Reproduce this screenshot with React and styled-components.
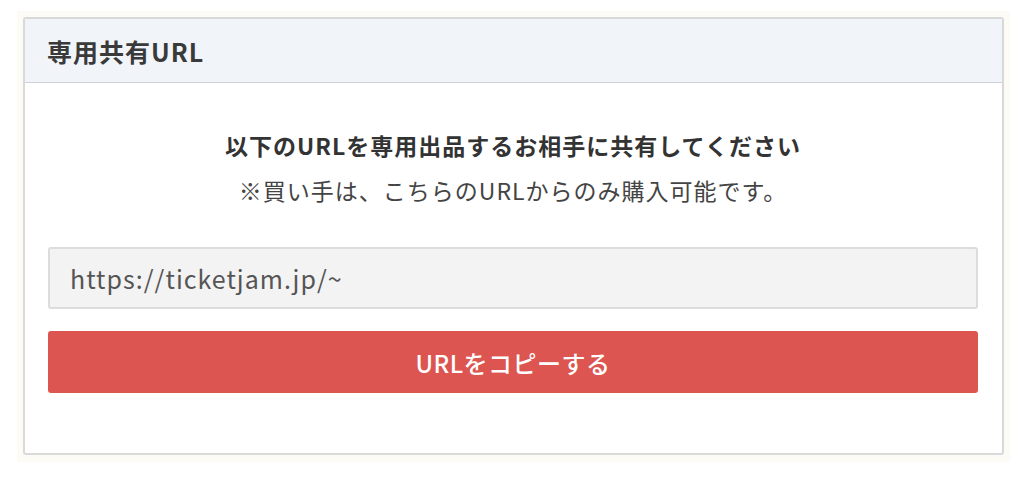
import React from 'react';
import styled, { createGlobalStyle } from 'styled-components';

const GlobalStyle = createGlobalStyle`
  html, body {
    margin: 0;
    padding: 0;
    background: #ffffff;
    font-family: "Noto Sans CJK JP", "Noto Sans", sans-serif;
  }
  * {
    box-sizing: border-box;
  }
`;

const Page = styled.div`
  padding: 11px 14px 0 17px;
`;

const Backdrop = styled.div`
  background: #fcfbf6;
  padding: 6px 6px 7px 6px;
  width: 993px;
`;

const Card = styled.section`
  background: #ffffff;
  border: 2px solid #d9d9d9;
  border-radius: 3px;
  overflow: hidden;
`;

const Header = styled.header`
  height: 64px;
  background: #f1f5fa;
  border-bottom: 1.5px solid #cfd3d8;
  display: flex;
  align-items: center;
  padding-left: 22px;
`;

const Title = styled.h2`
  margin: 0;
  font-size: 25px;
  font-weight: 700;
  color: #3a3a3a;
  letter-spacing: 1px;
`;

const Body = styled.div`
  padding: 46px 24px 60px 23px;
  display: flex;
  flex-direction: column;
`;

const Lead = styled.p`
  margin: 0;
  text-align: center;
  font-size: 23px;
  font-weight: 700;
  color: #333333;
  letter-spacing: 1px;
  line-height: 32px;
`;

const Note = styled.p`
  margin: 13px 0 0;
  text-align: center;
  font-size: 23px;
  color: #444444;
  letter-spacing: 1px;
  line-height: 32px;
`;

const UrlBox = styled.div`
  margin-top: 41px;
  height: 62px;
  background: #f3f3f3;
  border: 2px solid #dcdcdc;
  border-radius: 3px;
  display: flex;
  align-items: center;
  padding-left: 20px;
  font-size: 25px;
  letter-spacing: 1px;
  color: #555555;
`;

const CopyButton = styled.button`
  margin-top: 22px;
  height: 62px;
  border: none;
  border-radius: 3px;
  background: #dc5550;
  color: #ffffff;
  font-family: inherit;
  font-size: 24px;
  font-weight: 500;
  letter-spacing: 0.5px;
  cursor: pointer;
`;

export default function App() {
  return (
    <>
      <GlobalStyle />
      <Page>
        <Backdrop>
          <Card>
            <Header>
              <Title>専用共有URL</Title>
            </Header>
            <Body>
              <Lead>以下のURLを専用出品するお相手に共有してください</Lead>
              <Note>※買い手は、こちらのURLからのみ購入可能です。</Note>
              <UrlBox>https://ticketjam.jp/~</UrlBox>
              <CopyButton>URLをコピーする</CopyButton>
            </Body>
          </Card>
        </Backdrop>
      </Page>
    </>
  );
}
